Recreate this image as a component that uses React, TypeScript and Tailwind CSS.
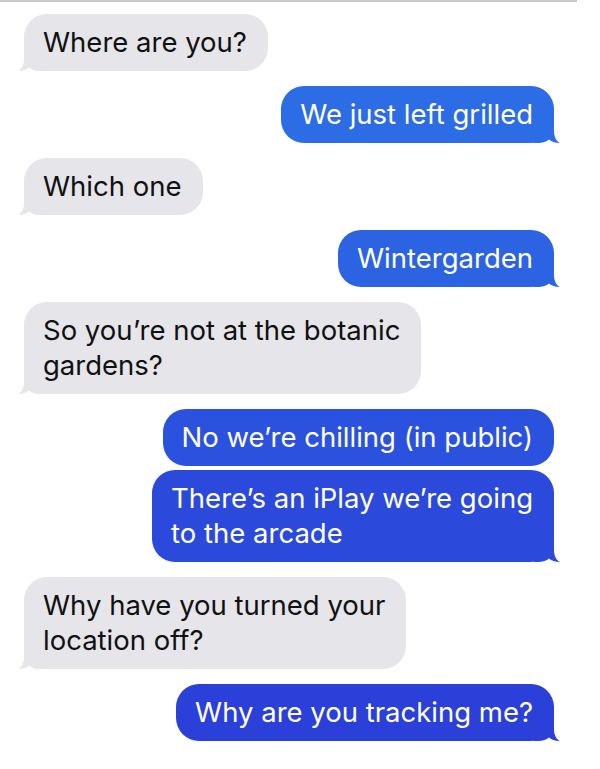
import React from "react";

type Msg = { text: string[]; me: boolean; bg: string; gap: string };

const messages: Msg[] = [
  { text: ["Where are you?"], me: false, bg: "bg-[#e5e5ea]", gap: "mt-3" },
  { text: ["We just left grilled"], me: true, bg: "bg-[#2c6ce4]", gap: "mt-[15px]" },
  { text: ["Which one"], me: false, bg: "bg-[#e5e5ea]", gap: "mt-[15px]" },
  { text: ["Wintergarden"], me: true, bg: "bg-[#2b63e3]", gap: "mt-[15px]" },
  { text: ["So you\u2019re not at the botanic", "gardens?"], me: false, bg: "bg-[#e5e5ea]", gap: "mt-[15px]" },
  { text: ["No we\u2019re chilling (in public)"], me: true, bg: "bg-[#2b52df]", gap: "mt-[15px]" },
  { text: ["There\u2019s an iPlay we\u2019re going", "to the arcade"], me: true, bg: "bg-[#2b4adc]", gap: "mt-1" },
  { text: ["Why have you turned your", "location off?"], me: false, bg: "bg-[#e5e5ea]", gap: "mt-[15px]" },
  { text: ["Why are you tracking me?"], me: true, bg: "bg-[#2a40d9]", gap: "mt-[15px]" },
];

const tailColor: Record<string, string> = {
  "bg-[#e5e5ea]": "fill-[#e5e5ea]",
  "bg-[#2c6ce4]": "fill-[#2c6ce4]",
  "bg-[#2b63e3]": "fill-[#2b63e3]",
  "bg-[#2b52df]": "fill-[#2b52df]",
  "bg-[#2b4adc]": "fill-[#2b4adc]",
  "bg-[#2a40d9]": "fill-[#2a40d9]",
};

function Tail({ me, fill, show }: { me: boolean; fill: string; show: boolean }) {
  if (!show) return null;
  return (
    <svg
      width="26"
      height="22"
      viewBox="0 0 26 22"
      className={`absolute bottom-0 ${me ? "right-[-6px]" : "left-[-6px] -scale-x-100"} ${fill}`}
    >
      <path d="M0 0 H20 V10 C20 16 22.5 20.5 26 22 C21 22 17.5 20.5 15 18.5 C12.5 20.5 9 22 4 22 H0 Z" />
    </svg>
  );
}

export default function App() {
  return (
    <div className="w-[600px] h-[769px] bg-white overflow-hidden font-['Inter','Liberation_Sans',sans-serif]">
      <div className="h-[2px] w-[577px] bg-[#c8c8c8]" />
      <div className="flex flex-col pl-6 pr-[46px]">
        {messages.map((m, i) => {
          const next = messages[i + 1];
          const showTail = !next || next.me !== m.me;
          return (
            <div key={i} className={`flex ${m.me ? "justify-end" : "justify-start"} ${m.gap}`}>
              <div
                className={`relative rounded-[23px] pl-[19px] pr-[21px] py-[11px] text-[27.5px] leading-[35px] whitespace-nowrap ${m.bg} ${
                  m.me ? "text-white" : "text-[#111]"
                }`}
              >
                {m.text.map((line, j) => (
                  <div key={j} className="relative z-10">
                    {line}
                  </div>
                ))}
                <Tail me={m.me} fill={tailColor[m.bg]} show={showTail} />
              </div>
            </div>
          );
        })}
      </div>
    </div>
  );
}
